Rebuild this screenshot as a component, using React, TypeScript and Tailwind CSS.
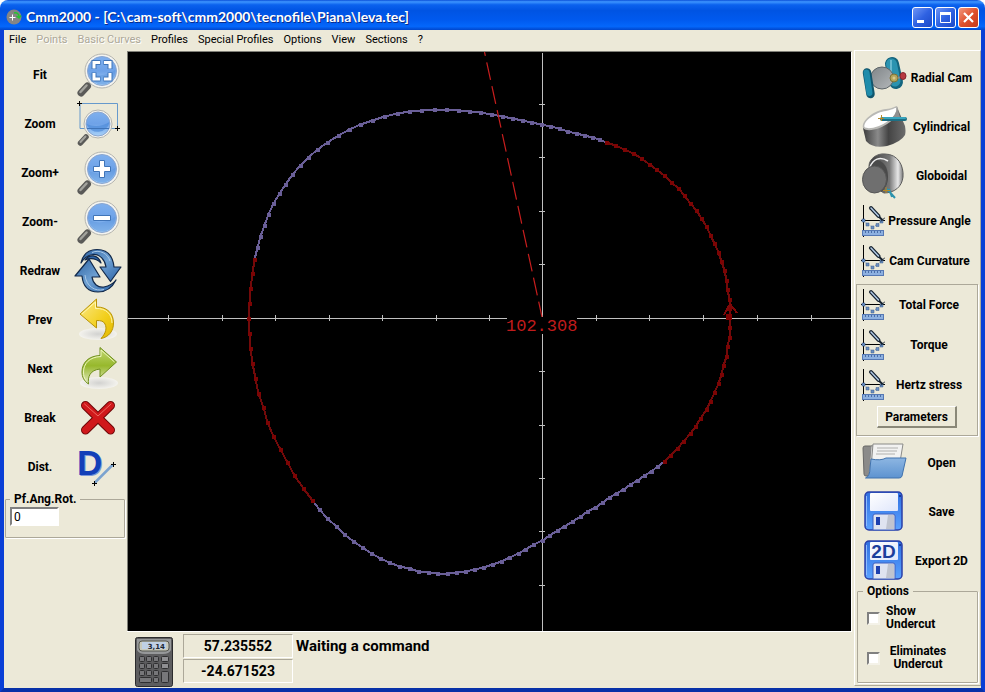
import type { ReactNode } from "react";

type Point = [number, number];

const menu = [
  { label: "File" },
  { label: "Points", disabled: true },
  { label: "Basic Curves", disabled: true },
  { label: "Profiles" },
  { label: "Special Profiles" },
  { label: "Options" },
  { label: "View" },
  { label: "Sections" },
  { label: "?" },
];

const riseCurve: Point[] = [
  [254, 259], [257, 247], [260, 236], [264, 225], [268, 214], [273, 203], [279, 193], [285, 184],
  [292, 174], [300, 165], [308, 157], [317, 149], [327, 142], [338, 135], [349, 129], [360, 124],
  [372, 120], [384, 116], [397, 113], [409, 111], [421, 110], [434, 109], [446, 109], [458, 110],
  [469, 111], [480, 112], [491, 114], [502, 116], [512, 118], [522, 120], [531, 122], [541, 124],
  [550, 126], [559, 128], [567, 131], [576, 133], [584, 135], [592, 137], [599, 139], [606, 142],
];

const rightDwell: Point[] = [
  [606, 142], [615, 145], [624, 149], [633, 153], [641, 158], [649, 164], [656, 169], [664, 175],
  [671, 182], [678, 188], [684, 195], [690, 203], [696, 210], [701, 218], [706, 226], [710, 235],
  [714, 243], [718, 252], [721, 261], [724, 270], [726, 280], [727, 289], [729, 299], [729, 308],
  [729, 317], [729, 327], [729, 337], [727, 346], [726, 356], [723, 365], [721, 374], [718, 383],
  [714, 392], [710, 401], [706, 409], [700, 418], [695, 426], [690, 433], [683, 441], [677, 448],
  [670, 455], [664, 461],
];

const fallCurve: Point[] = [
  [664, 461], [657, 466], [651, 471], [644, 475], [637, 480], [630, 484], [623, 489], [616, 493],
  [609, 497], [602, 502], [595, 507], [587, 511], [580, 516], [572, 521], [564, 526], [557, 530],
  [549, 535], [542, 540], [533, 544], [525, 549], [518, 553], [509, 557], [501, 561], [492, 564],
  [483, 567], [474, 569], [465, 571], [456, 572], [447, 573], [437, 573], [428, 572], [418, 571],
  [409, 568], [399, 566], [389, 562], [380, 558], [371, 553], [362, 547], [353, 541], [344, 534],
  [336, 526], [327, 518], [319, 509], [312, 500],
];

const leftDwell: Point[] = [
  [312, 500], [303, 488], [294, 475], [287, 462], [280, 449], [273, 436], [267, 422], [263, 407],
  [258, 393], [255, 378], [252, 363], [250, 348], [249, 333], [248, 318], [249, 303], [250, 288],
  [252, 273], [254, 259],
];

const ticksX = [168, 222, 275, 329, 382, 436, 489, 596, 649, 703, 757, 811];
const ticksY = [104, 157, 211, 264, 371, 425, 478, 531, 585];

function Profile({ points, color, dot }: { points: Point[]; color: string; dot: string }) {
  return (
    <g>
      <polyline
        points={points.map(([x, y]) => `${x + 0.5},${y + 0.5}`).join(" ")}
        fill="none"
        stroke={color}
        strokeWidth="2"
      />
      {points.map(([x, y]) => (
        <rect key={`${x}-${y}`} x={x - 1} y={y - 1} width="4" height="4" fill={dot} />
      ))}
    </g>
  );
}

function Drawing() {
  return (
    <svg viewBox="128 52 723 579" className="block w-full flex-1 bg-black" role="img" aria-label="Cam profile">
      <g shapeRendering="crispEdges">
        <g stroke="#c0c0c0" strokeWidth="1">
          <path d="M128 318.500H851M542.500 53V631" />
          {ticksX.map((x) => (
            <path key={x} d={`M${x + 0.5} 315V321`} />
          ))}
          {ticksY.map((y) => (
            <path key={y} d={`M539 ${y + 0.5}H545`} />
          ))}
        </g>
        <Profile points={riseCurve} color="#6a5f98" dot="#6a5f98" />
        <Profile points={fallCurve} color="#6a5f98" dot="#6a5f98" />
        <Profile points={rightDwell} color="#720a0a" dot="#7c0404" />
        <Profile points={leftDwell} color="#720a0a" dot="#7c0404" />
        <rect x="726" y="314" width="6" height="6" fill="#800000" />
        <path d="M724 315L730 304L737 313" fill="none" stroke="#800808" strokeWidth="2" />
      </g>
      <path d="M484.500 52L542 317" stroke="#c81e1e" strokeWidth="1.200" strokeDasharray="18 6.500" strokeDashoffset="14" />
      <rect x="507" y="317" width="70" height="17" fill="#000" />
      <text x="506" y="331" fontFamily="Liberation Mono, monospace" fontWeight="400" fontSize="17" fill="#c01c1c">
        102.308
      </text>
    </svg>
  );
}

function ToolIcon({ children }: { children: ReactNode }) {
  return (
    <svg viewBox="0 0 44 49" width="44" height="49" className="shrink-0 overflow-visible" aria-hidden="true">
      {children}
    </svg>
  );
}

function Lens({ children }: { children: ReactNode }) {
  return (
    <ToolIcon>
      <path d="M11.500 36L5 43" stroke="#5a5a58" strokeWidth="7" strokeLinecap="round" />
      <path d="M10.500 35.500L4.500 42" stroke="#a2a29c" strokeWidth="2.500" strokeLinecap="round" />
      <circle cx="26" cy="21" r="17" fill="#f4f4f0" stroke="#b4b4ae" />
      <circle cx="26" cy="21" r="14.500" fill="url(#lens)" stroke="#8ba6cf" />
      <path d="M13 23Q26 29 39 20A13 13 0 0 1 13 23Z" fill="#5a93dc" opacity=".5" />
      {children}
    </ToolIcon>
  );
}

function Cross({ x, y }: { x: number; y: number }) {
  return <path d={`M${x - 2} ${y + 0.5}h5M${x + 0.5} ${y - 2}v5`} stroke="#000" />;
}

const tools: { label: string; icon: ReactNode }[] = [
  {
    label: "Fit",
    icon: (
      <Lens>
        <path
          d="M18 19v-6.500h6.500M27.500 12.500H34V19M34 22.500V29h-6.500M24.500 29H18v-6.500"
          fill="none"
          stroke="#3f74b8"
          strokeWidth="5"
        />
        <path
          d="M18 18.500v-6h6M28 12.500h6v6M34 23v6h-6M24 29h-6v-6"
          fill="none"
          stroke="#fff"
          strokeWidth="3"
        />
      </Lens>
    ),
  },
  {
    label: "Zoom",
    icon: (
      <ToolIcon>
        <path d="M4 4.500H41.500V29.500H4Z" fill="none" stroke="#6699cc" />
        <Cross x={3} y={4} />
        <Cross x={41} y={29} />
        <path d="M10 38L4.500 44" stroke="#5a5a58" strokeWidth="5.500" strokeLinecap="round" />
        <path d="M9.500 37.500L4.500 43" stroke="#a2a29c" strokeWidth="2" strokeLinecap="round" />
        <circle cx="22" cy="25" r="14" fill="#f4f4f0" stroke="#b4b4ae" />
        <circle cx="22" cy="25" r="12" fill="url(#lens)" stroke="#8ba6cf" />
        <path d="M10.500 25Q22 30 33.500 23A12 12 0 0 1 10.500 25Z" fill="#4f8cd9" opacity=".7" />
        <path d="M11 29.500H33" stroke="#3f74b8" />
      </ToolIcon>
    ),
  },
  {
    label: "Zoom+",
    icon: (
      <Lens>
        <path d="M23.500 12.500h5v6h6v5h-6v6h-5v-6h-6v-5h6Z" fill="#fff" stroke="#3f74b8" />
      </Lens>
    ),
  },
  {
    label: "Zoom-",
    icon: (
      <Lens>
        <path d="M17.500 18.500h17v5h-17Z" fill="#fff" stroke="#3f74b8" />
      </Lens>
    ),
  },
  {
    label: "Redraw",
    icon: (
      <ToolIcon>
        <g stroke="#12294a" strokeWidth="1.200" strokeLinejoin="round">
          <path
            d="M5 17C7 8 13 3.500 21 3.500C32 3.500 37 11 38 21H45L34.500 35.500L24 21H30C29 14 24 8 17 8.500C12 9 8 12 5 17Z"
            fill="url(#arrow)"
          />
          <path
            d="M40 34C36 42 30 46 22 46C12 46 7 40 6 30H-1L13 13L24 31H16C17 38 22 42 28 41C33 40 37 38 40 34Z"
            fill="url(#arrow)"
          />
          <path d="M9 14C13 8 22 8 25 17C20 12 14 12 9 14Z" fill="#2f66a8" />
        </g>
        <path d="M16 6.500C24 3 32 8 34 15" fill="none" stroke="#a9c8e6" />
        <path d="M28 43.500C19 46 10 40 9 29" fill="none" stroke="#a9c8e6" />
      </ToolIcon>
    ),
  },
  {
    label: "Prev",
    icon: (
      <ToolIcon>
        <ellipse cx="22" cy="39" rx="19" ry="6" fill="url(#shade)" />
        <path
          d="M4 19L20.500 4V12C32 12 37.500 19 37.500 28C37.500 36 33 42 25 43.500C30 38 31 33 29 29C27.500 26 25 25.500 20.500 25.500V33Z"
          fill="url(#yellow)"
          stroke="#b89308"
          strokeLinejoin="round"
        />
        <path d="M6 19L19.500 7V13.500C30 13 36 19 36 28" fill="none" stroke="#fff7b0" />
      </ToolIcon>
    ),
  },
  {
    label: "Next",
    icon: (
      <ToolIcon>
        <ellipse cx="23" cy="39" rx="19" ry="6" fill="url(#shade)" />
        <path
          d="M40.500 18L24 3.500V11.500C12 12 6 19 6 28C6 33 8 37 12.500 40C11.500 33 14 26 24 25V33Z"
          fill="url(#green)"
          stroke="#6f8f1c"
          strokeLinejoin="round"
        />
        <path d="M38.500 18L25 6V12.500C13 13 7.500 20 7.500 28C7.500 31 8 34 10 36" fill="none" stroke="#eef6bd" />
      </ToolIcon>
    ),
  },
  {
    label: "Break",
    icon: (
      <ToolIcon>
        <path d="M9.500 12.500L34.500 37M34.500 12.500L9.500 37" stroke="#6e0708" strokeWidth="9" strokeLinecap="round" />
        <path d="M9.500 12.500L34.500 37M34.500 12.500L9.500 37" stroke="#d0181b" strokeWidth="7" strokeLinecap="round" />
        <path d="M8.500 11L22 23L35 11" fill="none" stroke="#ee6a62" strokeLinecap="round" />
      </ToolIcon>
    ),
  },
  {
    label: "Dist.",
    icon: (
      <ToolIcon>
        <text x="2" y="34" fontFamily="Liberation Sans, sans-serif" fontWeight="700" fontSize="35" fill="#7b98d8">
          D
        </text>
        <text x="1" y="33" fontFamily="Liberation Sans, sans-serif" fontWeight="700" fontSize="35" fill="#1340b8">
          D
        </text>
        <path d="M18.500 41L37 22.500" stroke="#7ba3cf" strokeWidth="2.500" />
        <Cross x={18} y={41} />
        <Cross x={37} y={22} />
      </ToolIcon>
    ),
  },
];

const cams: { label: string; icon: ReactNode }[] = [
  {
    label: "Radial Cam",
    icon: (
      <ToolIcon>
        <path d="M31 11L35 29" stroke="#14657e" strokeWidth="14" strokeLinecap="round" />
        <path d="M30.500 11L34 28" stroke="#2b93b0" strokeWidth="11" strokeLinecap="round" />
        <path d="M30 7V24" stroke="#68b9cf" strokeWidth="2" />
        <ellipse cx="21" cy="25" rx="11.500" ry="11" fill="url(#steel)" stroke="#5c6468" />
        <path d="M6 19.500L9.500 41" stroke="#10566d" strokeWidth="8.500" strokeLinecap="round" />
        <path d="M5.500 19.500L8.500 40" stroke="#1f8cab" strokeWidth="6" strokeLinecap="round" />
        <circle cx="33" cy="25" r="4" fill="#b2a45c" stroke="#7d7236" />
        <circle cx="33" cy="25" r="1.500" fill="#d8c98a" />
        <path d="M37 25L42 23" stroke="#8d8d85" strokeWidth="2" />
        <ellipse cx="42" cy="23" rx="3" ry="3.500" fill="#b83840" stroke="#84242c" />
      </ToolIcon>
    ),
  },
  {
    label: "Cylindrical",
    icon: (
      <ToolIcon>
        <path d="M2 26L5 39Q12 47 26 44Q40 40 44 33Q45 30 44 24L36 5Z" fill="url(#barrel)" />
        <path d="M2 26C0 18 14 8 25 7C31 7 34 4 36 4C39 10 37 15 29 20C20 27 6 31 2 26Z" fill="#b9b9b5" />
        <path d="M3.500 25C2 19 15 10 25 9C31 8 33 6 35 6C36 11 33 15 27 19C19 25 7 28 3.500 25Z" fill="#fff" />
        <path d="M26 20Q36 13 36 5L39 15Z" fill="#909090" />
        <path d="M21 17L44 17" stroke="#1d6f84" strokeWidth="4" strokeLinecap="round" />
        <path d="M22 16L44 16" stroke="#38a4bd" strokeWidth="2" strokeLinecap="round" />
        <path d="M17 16.500h6M20.500 13v6" stroke="#b38a28" />
      </ToolIcon>
    ),
  },
  {
    label: "Globoidal",
    icon: (
      <ToolIcon>
        <path d="M8 15C8 8 16 2 24 3C37 3 43 15 42 26C41 36 33 42 23 42L8 33Z" fill="url(#globe)" stroke="#5d5d5d" />
        <path d="M8 17C9 10 14 8 19 10C25 13 27 19 27 26C27 33 24 38 20 41Z" fill="#4a4a4a" />
        <path d="M9 16C12 8 19 5 27 10" fill="none" stroke="#f0f0f0" strokeWidth="1.500" />
        <ellipse cx="13.500" cy="28.500" rx="12" ry="13.500" fill="#6f6f6f" stroke="#555" />
        <path d="M26 38L34 47M28 38L31 46" stroke="#2c93ad" strokeWidth="2" />
        <path d="M22 39.500h7M25 36v6" stroke="#b38a28" />
      </ToolIcon>
    ),
  },
];

function GraphIcon() {
  return (
    <svg viewBox="0 0 24 32" width="24" height="32" className="shrink-0" aria-hidden="true">
      <path d="M2.500 0V32M0 15.500H24" stroke="#000" shapeRendering="crispEdges" />
      <path d="M2 16L6.500 19L11.500 22L16.500 19.500L21 16" fill="none" stroke="#8fa3bd" strokeDasharray="1 1" />
      <path
        d="M1 14h3v3h-3ZM5 18h3v3h-3ZM10 21h3v3h-3ZM15 18.500h3v3h-3ZM19 15h3v3h-3Z"
        fill="#6a8fc2"
        stroke="#3f5f8c"
        strokeWidth=".500"
      />
      <path d="M10 3L17.500 11" fill="none" stroke="#14202e" strokeWidth="4" strokeLinecap="round" />
      <path d="M17 11L21.500 15" stroke="#14202e" strokeWidth="2" />
      <path d="M10 3L17.500 11" stroke="#b3cbe6" strokeWidth="1.500" strokeLinecap="round" />
      <path d="M20 16.500L24 12.500" stroke="#0d1a28" />
      <rect x="1.500" y="25.500" width="21" height="5" fill="#8db0e0" stroke="#5578b4" />
      <path d="M4.500 26v2M7.500 26v2M10.500 26v2M13.500 26v2M16.500 26v2M19.500 26v2" stroke="#4a6ea8" />
    </svg>
  );
}

function Floppy({ text }: { text?: string }) {
  return (
    <ToolIcon>
      <rect x="4" y="5" width="37" height="38" rx="4" fill="url(#floppy)" stroke="#2a3fa8" strokeWidth="1.500" />
      <path d="M5.500 9V39" stroke="#8dbcff" />
      <rect x="9" y="6" width="28" height="18" rx="1" fill="url(#paper)" />
      <rect x="38" y="8" width="2" height="2" fill="#1b3c9c" />
      <path d="M12 43V29Q12 27 14 27H32Q34 27 34 29V43Z" fill="#dfe3f0" stroke="#3f60c0" />
      <path d="M27 28H33V42H25Z" fill="#c0c4cf" />
      <rect x="15" y="30" width="4" height="8" fill="#1d3fae" />
      {text && (
        <text
          x="22.500"
          y="22"
          textAnchor="middle"
          fontFamily="Liberation Sans, sans-serif"
          fontWeight="700"
          fontSize="19"
          fill="#1c3e9c"
        >
          {text}
        </text>
      )}
    </ToolIcon>
  );
}

const files: { label: string; icon: ReactNode }[] = [
  {
    label: "Open",
    icon: (
      <ToolIcon>
        <path d="M2 10Q2 8 4 8H14L16 11H34V38H5Q3 38 3 36Z" fill="#8b8b89" stroke="#686866" />
        <path d="M10 8L8 34H30L34 8Z" fill="#d6d6d4" stroke="#888" />
        <path d="M12 6H42L38 30H10Z" fill="#f2f2f1" stroke="#8a8a88" />
        <path d="M16 10H37M16 13H36M15 16H34" stroke="#b0b0ae" />
        <path d="M10 21Q20 23 25 20H45L41 38Q40.500 40 38 40H4.500Q9 38 9 30Z" fill="url(#folder)" stroke="#4072ad" />
      </ToolIcon>
    ),
  },
  { label: "Save", icon: <Floppy /> },
  { label: "Export 2D", icon: <Floppy text="2D" /> },
];

function BigButton({ label, icon }: { label: string; icon: ReactNode }) {
  return (
    <button className="flex h-[49px] w-full items-center pl-1.5">
      {icon}
      <span className="flex-1 whitespace-nowrap text-center">{label}</span>
    </button>
  );
}

function GraphButton({ label }: { label: string }) {
  return (
    <button className="flex h-10 w-full items-center">
      <GraphIcon />
      <span className="flex-1 whitespace-nowrap text-center">{label}</span>
    </button>
  );
}

function Gradients() {
  return (
    <svg width="0" height="0" className="absolute" aria-hidden="true">
      <defs>
        <linearGradient id="lens" x2="0" y2="1">
          <stop offset="0" stopColor="#7fb0ee" />
          <stop offset=".5" stopColor="#6ea2e8" />
          <stop offset="1" stopColor="#a9d2f8" />
        </linearGradient>
        <linearGradient id="arrow" x2="1" y2="1">
          <stop offset="0" stopColor="#2c62a2" />
          <stop offset=".5" stopColor="#6ea0d2" />
          <stop offset="1" stopColor="#2a62a6" />
        </linearGradient>
        <linearGradient id="yellow" x2="1" y2="1">
          <stop offset="0" stopColor="#fbe98a" />
          <stop offset=".6" stopColor="#f2cf1c" />
          <stop offset="1" stopColor="#e2b800" />
        </linearGradient>
        <linearGradient id="green" x2="0" y2="1">
          <stop offset="0" stopColor="#c3d873" />
          <stop offset=".5" stopColor="#97b82c" />
          <stop offset="1" stopColor="#e6ecc8" />
        </linearGradient>
        <radialGradient id="shade">
          <stop offset="0" stopColor="#d2d2d0" />
          <stop offset="1" stopColor="#f4f3ee" />
        </radialGradient>
        <linearGradient id="steel" x2="1" y2="1">
          <stop offset="0" stopColor="#7f8487" />
          <stop offset="1" stopColor="#b4b8ba" />
        </linearGradient>
        <linearGradient id="barrel">
          <stop offset="0" stopColor="#3c3c3c" />
          <stop offset=".35" stopColor="#8a8a8a" />
          <stop offset=".6" stopColor="#444" />
          <stop offset="1" stopColor="#6c6c6c" />
        </linearGradient>
        <linearGradient id="globe">
          <stop offset=".1" stopColor="#444" />
          <stop offset=".6" stopColor="#777" />
          <stop offset=".85" stopColor="#e8e8e8" />
          <stop offset="1" stopColor="#777" />
        </linearGradient>
        <linearGradient id="floppy" x2="0" y2="1">
          <stop offset="0" stopColor="#2f6fe0" />
          <stop offset="1" stopColor="#5aa2ff" />
        </linearGradient>
        <linearGradient id="paper" x2="1" y2="1">
          <stop offset="0" stopColor="#fff" />
          <stop offset="1" stopColor="#dfe6fb" />
        </linearGradient>
        <linearGradient id="folder" x2="0" y2="1">
          <stop offset="0" stopColor="#8db6e2" />
          <stop offset="1" stopColor="#5d93d0" />
        </linearGradient>
      </defs>
    </svg>
  );
}

function Calculator() {
  return (
    <svg viewBox="0 0 38 50" width="38" height="50" className="shrink-0" aria-hidden="true">
      <rect x=".5" y=".5" width="37" height="49" rx="2" fill="#5d5d5f" stroke="#2b2b2d" />
      <path d="M2 2H36V13Q34 17 28 17H10Q4 17 2 13Z" fill="#96989a" />
      <rect x="4" y="4" width="30" height="10" rx="3" fill="#c9cabb" stroke="#55564f" />
      <rect x="7" y="5" width="24" height="7" fill="#bfd0e4" />
      <text x="30" y="12" textAnchor="end" fontFamily="DejaVu Sans, sans-serif" fontWeight="700" fontSize="7" fill="#1d2733">
        3,14
      </text>
      <g fill="#77777a" stroke="#2f2f31">
        {[19.5, 26.5, 33.5].map((y) =>
          [4.5, 11.5, 18.5].map((x) => <rect key={`${x}-${y}`} x={x} y={y} width="5" height="5" rx="1" />),
        )}
        <rect x="4.500" y="40.500" width="12" height="5" rx="1" />
        <rect x="18.500" y="40.500" width="5" height="5" rx="1" />
        <rect x="26.500" y="19.500" width="7" height="5" rx="1" fill="#8f8f92" />
        <rect x="26.500" y="26.500" width="7" height="5" rx="1" fill="#8f8f92" />
        <rect x="26.500" y="34.500" width="7" height="11" rx="1" />
      </g>
    </svg>
  );
}

function TitleBar() {
  const control =
    "grid size-[21px] place-items-center rounded-[3px] border border-white bg-linear-to-br from-[#6f95f5] via-[#2f62e2] to-[#1c48c8]";
  return (
    <header className="flex h-[30px] items-center gap-1 rounded-t-lg bg-linear-[180deg,#0a4fd8_0%,#3d95ff_6%,#0b62ee_16%,#0054e3_35%,#0059ee_65%,#0467fb_88%,#0046cc_100%] pl-1.5 pr-1.5 pt-1">
      <svg viewBox="0 0 16 16" width="16" height="16" aria-hidden="true">
        <circle cx="8" cy="8" r="7.500" fill="#858585" />
        <path d="M3.500 8.500h6M6.500 5.500v6" stroke="#fff" />
        <path d="M8 4C11 3 13 5 13 8M10.500 7L13 9L15 6.500" fill="none" stroke="#25c52e" strokeWidth="1.500" />
      </svg>
      <h1 className="flex-1 truncate font-[Lato,sans-serif] text-sm font-bold text-white [text-shadow:1px_1px_0_#0a2d8c]">
        Cmm2000 - [C:\cam-soft\cmm2000\tecnofile\Piana\leva.tec]
      </h1>
      <div className="flex gap-0.5">
        <button aria-label="Minimize" className={control}>
          <svg viewBox="0 0 19 19" width="19" height="19">
            <path d="M4 13.500h7" stroke="#fff" strokeWidth="3" />
          </svg>
        </button>
        <button aria-label="Maximize" className={control}>
          <svg viewBox="0 0 19 19" width="19" height="19">
            <path d="M4.500 5v9.500h10V5" fill="none" stroke="#fff" />
            <path d="M4 5.500h11" stroke="#fff" strokeWidth="3" />
          </svg>
        </button>
        <button
          aria-label="Close"
          className="grid size-[21px] place-items-center rounded-[3px] border border-white bg-linear-to-br from-[#f0957c] via-[#e0512c] to-[#c5391a]"
        >
          <svg viewBox="0 0 19 19" width="19" height="19">
            <path d="M5 5L14 14M14 5L5 14" stroke="#fff" strokeWidth="2.200" />
          </svg>
        </button>
      </div>
    </header>
  );
}

export default function App() {
  const sunken = "border border-t-[#aca899] border-l-[#aca899] border-b-white border-r-white";
  const checkbox =
    "size-[13px] shrink-0 appearance-none border-2 border-t-[#808080] border-l-[#808080] border-b-[#f4f2e8] border-r-[#f4f2e8] bg-white";
  return (
    <div className="flex min-h-screen flex-col bg-white font-[Roboto,sans-serif] text-xs font-bold text-black">
      <Gradients />
      <TitleBar />
      <div className="flex flex-1 flex-col border-x-4 border-b-4 border-[#0a3fd6] border-b-[#0831a8] bg-[#ece9d8]">
        <nav className="flex h-[18px] items-center gap-[10px] pl-[5px] pt-0.5 text-[11px] font-normal">
          {menu.map((item) => (
            <button
              key={item.label}
              disabled={item.disabled}
              className="whitespace-nowrap disabled:text-[#aca899] disabled:[text-shadow:1px_1px_0_#fff]"
            >
              {item.label}
            </button>
          ))}
        </nav>

        <main className="flex flex-1">
          <aside className="w-[123px] shrink-0 pt-0.5">
            {tools.map((tool) => (
              <button key={tool.label} className="flex h-[49px] w-full items-center">
                <span className="w-[72px] text-center">{tool.label}</span>
                {tool.icon}
              </button>
            ))}
            <fieldset className="ml-px mr-0.5 rounded-[1px] border border-[#aca899] px-1 pb-[11px] shadow-[1px_1px_0_#fff]">
              <legend className="px-1 leading-4">
                <label htmlFor="rotation">Pf.Ang.Rot.</label>
              </legend>
              <input
                id="rotation"
                defaultValue="0"
                className="block h-[19px] w-[49px] border-2 border-t-[#808080] border-l-[#808080] border-b-white border-r-white bg-white px-0.5 font-normal outline-none"
              />
            </fieldset>
          </aside>

          <section className="flex min-w-0 flex-1 flex-col pt-[3px]">
            <div className="flex flex-1 flex-col border-x border-t border-[#808078] border-r-white">
              <Drawing />
            </div>
            <div className="flex h-[57px] gap-2.5 border-t border-white pl-2 pt-0.5 text-[15px]">
              <button aria-label="Calculator" className="pt-px">
                <Calculator />
              </button>
              <div className="flex gap-[3px]">
                <div className="w-[110px] space-y-px text-center text-sm leading-[22px]">
                  <output className={`block ${sunken}`}>57.235552</output>
                  <output className={`block ${sunken}`}>-24.671523</output>
                </div>
                <p className="leading-6">Waiting a command</p>
              </div>
            </div>
          </section>

          <aside className="mb-0.5 ml-0.5 mt-0.5 w-[127px] shrink-0 border border-white border-b-[#aca899] border-r-[#aca899] pr-0.5 pt-0.5">
            {cams.map((item) => (
              <BigButton key={item.label} {...item} />
            ))}
            <div className="pl-1.5 pr-1 pt-px">
              <GraphButton label="Pressure Angle" />
              <GraphButton label="Cam Curvature" />
            </div>
            <div className="ml-px mt-[3px] border border-[#aca899] px-1 pb-[7px] shadow-[1px_1px_0_#fff]">
              <GraphButton label="Total Force" />
              <GraphButton label="Torque" />
              <GraphButton label="Hertz stress" />
              <button className="mx-auto mt-px block h-[22px] w-20 border border-b-2 border-r-2 border-white border-b-[#8a8878] border-r-[#8a8878]">
                Parameters
              </button>
            </div>
            <div className="pt-0.5">
              {files.map((item) => (
                <BigButton key={item.label} {...item} />
              ))}
            </div>
            <fieldset className="ml-0.5 rounded-[1px] border border-[#aca899] pb-[11px] pl-[9px] pt-2 leading-[13px] shadow-[1px_1px_0_#fff]">
              <legend className="-ml-1 px-1 leading-3">Options</legend>
              <div className="grid gap-3.5">
                <label className="flex items-center gap-1.5">
                  <input type="checkbox" className={checkbox} />
                  <span className="w-16">Show Undercut</span>
                </label>
                <label className="flex items-center gap-1.5">
                  <input type="checkbox" className={checkbox} />
                  <span className="w-16 text-center">Eliminates Undercut</span>
                </label>
              </div>
            </fieldset>
          </aside>
        </main>
      </div>
    </div>
  );
}
